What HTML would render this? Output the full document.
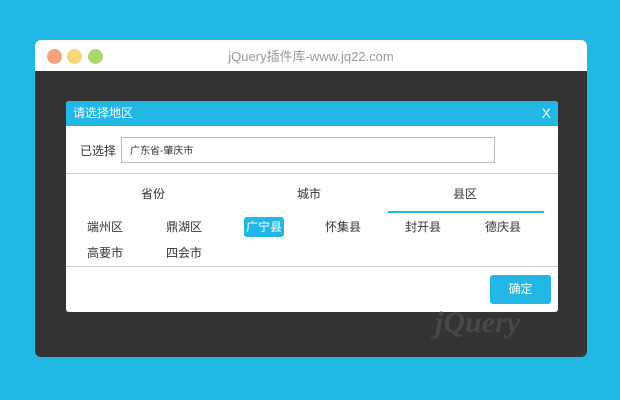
<!DOCTYPE html>
<html><head><meta charset="utf-8"><style>
*{margin:0;padding:0;box-sizing:border-box}
body{width:620px;height:400px;background:#22b7e4;position:relative;overflow:hidden;font-family:"Liberation Sans","Noto Sans CJK SC",sans-serif}
.win{position:absolute;left:35px;top:40px;width:552px;height:317px;background:#333;border-radius:6px;overflow:hidden}
.bar{height:31px;background:#fff;position:relative}
.dot{position:absolute;top:9px;width:15px;height:15px;border-radius:50%}
.ttl{position:absolute;left:0;right:0;top:6px;text-align:center;color:#999;font-size:13px}
.dlg{position:absolute;left:31px;top:61px;width:492px;height:211px;background:#fff;border-radius:3px;overflow:hidden}
.hd{height:25px;background:#22b7e4;color:#fff;font-size:12px;line-height:25px;padding-left:7px;position:relative}
.hd span{position:absolute;right:7px;top:0;font-size:14px}
.lbl{position:absolute;left:14px;top:41px;font-size:12px;color:#333}
.inp{position:absolute;left:55px;top:36px;width:374px;height:26px;border:1px solid #bbb;font-size:10px;line-height:28px;padding-left:8px;color:#333}
.hr{position:absolute;left:0;right:0;height:1px;background:#ccc}
.tab{position:absolute;top:84px;font-size:12px;color:#333;width:80px;text-align:center}
.it{position:absolute;font-size:12px;color:#333;line-height:20px}
.sel{background:#22b7e4;color:#fff;border-radius:3px;padding:0 2px}
.btn{position:absolute;left:424px;top:174px;width:61px;height:29px;background:#22b7e4;color:#fff;border-radius:3px;font-size:12px;text-align:center;line-height:29px}
</style></head><body>
<div class="win">
<div class="bar">
<div class="dot" style="left:12px;background:#f5a37d"></div>
<div class="dot" style="left:32px;background:#f8d67a"></div>
<div class="dot" style="left:53px;background:#a9d86e"></div>
<div class="ttl">jQuery插件库-www.jq22.com</div>
</div>
<div class="dlg">
<div class="hd">请选择地区<span>X</span></div>
<div class="lbl">已选择</div>
<div class="inp">广东省-肇庆市</div>
<div class="hr" style="top:72px"></div>
<div class="tab" style="left:47px">省份</div>
<div class="tab" style="left:203px">城市</div>
<div class="tab" style="left:359px">县区</div>
<div style="position:absolute;left:322px;top:110px;width:156px;height:2px;background:#22b7e4"></div>
<div class="it" style="left:21px;top:116px">端州区</div>
<div class="it" style="left:100px;top:116px">鼎湖区</div>
<div class="it sel" style="left:178px;top:116px">广宁县</div>
<div class="it" style="left:259px;top:116px">怀集县</div>
<div class="it" style="left:339px;top:116px">封开县</div>
<div class="it" style="left:419px;top:116px">德庆县</div>
<div class="it" style="left:21px;top:142px">高要市</div>
<div class="it" style="left:100px;top:142px">四会市</div>
<div class="hr" style="top:165px"></div>
<div class="btn">确定</div>
</div>
<div style="position:absolute;left:400px;top:266px;color:#484848;font-size:30px;font-style:italic;font-weight:bold;font-family:'Liberation Serif',serif">jQuery</div>
</div>
</body></html>
